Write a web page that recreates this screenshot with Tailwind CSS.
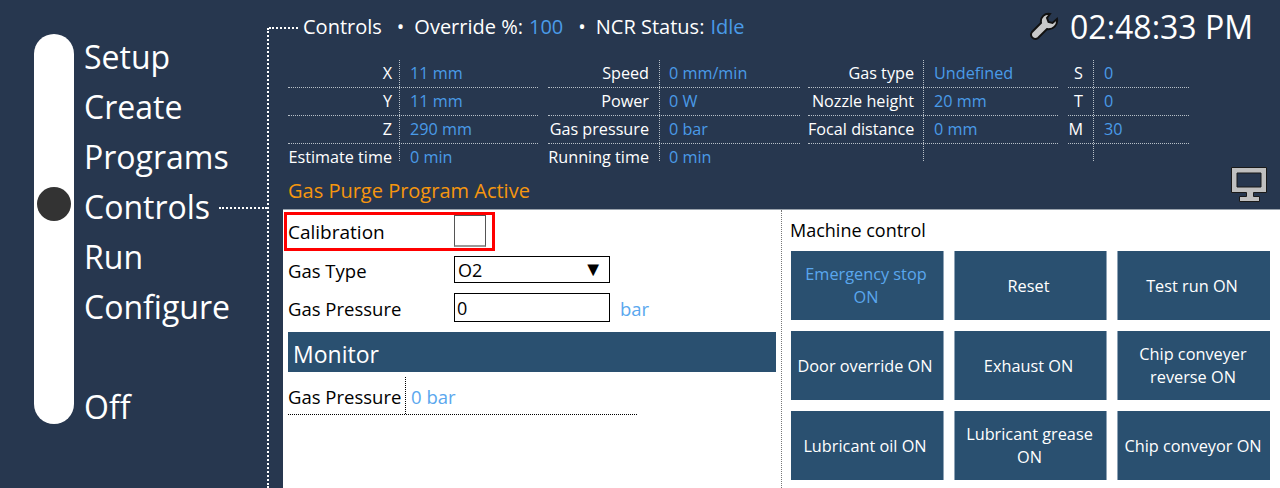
<!DOCTYPE html>
<html lang="en">
<head>
  <meta charset="UTF-8">
  <title>Controls</title>
  <script src="https://cdn.jsdelivr.net/npm/@tailwindcss/browser@4"></script>
</head>
<body class="bg-[#27374f] h-[488px] w-[1280px] overflow-hidden flex text-white font-['Open_Sans',sans-serif]">
  <!-- sidebar -->
  <nav class="w-[267px] shrink-0 flex pl-[34px] pt-[34px]">
    <div class="relative w-10 h-[390px] bg-white rounded-full shrink-0">
      <div class="absolute left-[3px] top-[153px] w-[34px] h-[34px] rounded-full bg-[#333333]"></div>
    </div>
    <ul class="ml-[10px] mt-[-2px] text-[32px] leading-[50px] flex-1">
      <li>Setup</li>
      <li>Create</li>
      <li>Programs</li>
      <li class="flex items-center">Controls<span class="flex-1 ml-[9px] mt-[1px] border-t-2 border-dotted border-white"></span></li>
      <li>Run</li>
      <li>Configure</li>
      <li class="mt-[50px]">Off</li>
    </ul>
  </nav>

  <main class="flex-1 flex flex-col mt-[28px] border-l-2 border-dotted border-white min-w-0 relative">
    <!-- header -->
    <header class="flex items-center h-[0px] -mt-[1px] pl-[34px] text-[20px] relative">
      <span class="absolute left-0 top-0 w-[29px] border-t-2 border-dotted border-white"></span>
      <span>Controls</span>
      <span class="ml-[15px]">•</span>
      <span class="ml-[10px]">Override %:</span>
      <span class="ml-[6px] text-[#4a9be8]">100</span>
      <span class="ml-[15px]">•</span>
      <span class="ml-[10px]">NCR Status:</span>
      <span class="ml-[6px] text-[#4a9be8]">Idle</span>
      <div class="ml-auto flex items-center pr-[27px]">
        <svg class="w-[30px] h-[30px]" viewBox="0 0 30 30"><path d="M21 2 C16 1 11 5 12 11 L3 20 C0 24 5 29 9 26 L18 17 C24 18 29 13 28 7 L23.5 11 L19.5 10 L18 6 Z" fill="#c8c8c8" stroke="#111" stroke-width="2"/></svg>
        <span class="ml-[11px] text-[32px]">02:48:33 PM</span>
      </div>
    </header>

    <!-- status table -->
    <section class="flex mt-[33px] ml-[19px] text-[16.2px] leading-[27px]">
      <div class="w-[250px]">
        <div class="flex h-[28px] border-b border-dotted border-[#b8c0c8]"><span class="w-[104px] text-right">X</span><span class="ml-[7px] pl-[10px] border-l border-dotted border-[#b8c0c8] text-[#4a9be8]">11 mm</span></div>
        <div class="flex h-[28px] border-b border-dotted border-[#b8c0c8]"><span class="w-[104px] text-right">Y</span><span class="ml-[7px] pl-[10px] border-l border-dotted border-[#b8c0c8] text-[#4a9be8]">11 mm</span></div>
        <div class="flex h-[28px] border-b border-dotted border-[#b8c0c8]"><span class="w-[104px] text-right">Z</span><span class="ml-[7px] pl-[10px] border-l border-dotted border-[#b8c0c8] text-[#4a9be8]">290 mm</span></div>
        <div class="flex h-[17px]"><span class="w-[104px] text-right whitespace-nowrap">Estimate time</span><span class="ml-[7px] pl-[10px] border-l border-dotted border-[#b8c0c8] text-[#4a9be8]">0 min</span></div>
      </div>
      <div class="w-[252px] ml-[10px]">
        <div class="flex h-[28px] border-b border-dotted border-[#b8c0c8]"><span class="w-[101px] text-right">Speed</span><span class="ml-[10px] pl-[9px] border-l border-dotted border-[#b8c0c8] text-[#4a9be8]">0 mm/min</span></div>
        <div class="flex h-[28px] border-b border-dotted border-[#b8c0c8]"><span class="w-[101px] text-right">Power</span><span class="ml-[10px] pl-[9px] border-l border-dotted border-[#b8c0c8] text-[#4a9be8]">0 W</span></div>
        <div class="flex h-[28px] border-b border-dotted border-[#b8c0c8]"><span class="w-[101px] text-right">Gas pressure</span><span class="ml-[10px] pl-[9px] border-l border-dotted border-[#b8c0c8] text-[#4a9be8]">0 bar</span></div>
        <div class="flex h-[17px]"><span class="w-[101px] text-right whitespace-nowrap">Running time</span><span class="ml-[10px] pl-[9px] border-l border-dotted border-[#b8c0c8] text-[#4a9be8]">0 min</span></div>
      </div>
      <div class="w-[250px] ml-[8px]">
        <div class="flex h-[28px] border-b border-dotted border-[#b8c0c8]"><span class="w-[106px] text-right">Gas type</span><span class="ml-[9px] pl-[10px] border-l border-dotted border-[#b8c0c8] text-[#4a9be8]">Undefined</span></div>
        <div class="flex h-[28px] border-b border-dotted border-[#b8c0c8]"><span class="w-[106px] text-right">Nozzle height</span><span class="ml-[9px] pl-[10px] border-l border-dotted border-[#b8c0c8] text-[#4a9be8]">20 mm</span></div>
        <div class="flex h-[28px] border-b border-dotted border-[#b8c0c8]"><span class="w-[106px] text-right whitespace-nowrap">Focal distance</span><span class="ml-[9px] pl-[10px] border-l border-dotted border-[#b8c0c8] text-[#4a9be8]">0 mm</span></div>
        <div class="flex h-[17px]"><span class="w-[106px]"></span><span class="ml-[9px] border-l border-dotted border-[#b8c0c8]"></span></div>
      </div>
      <div class="w-[121px] ml-[10px]">
        <div class="flex h-[28px] border-b border-dotted border-[#b8c0c8]"><span class="w-[15px] text-right">S</span><span class="ml-[10px] pl-[10px] border-l border-dotted border-[#b8c0c8] text-[#4a9be8]">0</span></div>
        <div class="flex h-[28px] border-b border-dotted border-[#b8c0c8]"><span class="w-[15px] text-right">T</span><span class="ml-[10px] pl-[10px] border-l border-dotted border-[#b8c0c8] text-[#4a9be8]">0</span></div>
        <div class="flex h-[28px] border-b border-dotted border-[#b8c0c8]"><span class="w-[15px] text-right">M</span><span class="ml-[10px] pl-[10px] border-l border-dotted border-[#b8c0c8] text-[#4a9be8]">30</span></div>
        <div class="flex h-[17px]"><span class="w-[15px]"></span><span class="ml-[10px] border-l border-dotted border-[#b8c0c8]"></span></div>
      </div>
    </section>

    <!-- banner -->
    <div class="flex items-start justify-between h-[48px] ml-[19px] pr-[12px]">
      <span class="mt-[18px] text-[20px] leading-[24px] text-[#f6960e]">Gas Purge Program Active</span>
      <svg class="w-[37px] h-[35px] mt-[6px]" viewBox="0 0 37 35"><path d="M0.5 0.5 H35.5 V25.5 H22.5 V29.5 H28.5 V34.5 H8.5 V29.5 H15.5 V25.5 H0.5 Z M6 6 V20 H30 V6 Z" fill="#c0c0c0" fill-rule="evenodd" stroke="#1a1a1a" stroke-width="1"/></svg>
    </div>

    <!-- white panel -->
    <div class="ml-[14px] flex-1 bg-white border-t border-[#9aa3ad] text-black flex min-h-0">
      <div class="w-[498px] shrink-0 pl-[5px] text-[18.5px]">
        <div class="-ml-[4px] mt-[2px] w-[211px] h-[39px] border-[3px] border-[#ff0000] flex items-center pl-[1px]">
          <span class="w-[166px] text-[19px] mt-[2px]">Calibration</span>
          <span class="w-[32px] h-[32px] border border-[#555555] border-b-2 border-b-[#999999] -mt-[1px]"></span>
        </div>
        <div class="flex items-center mt-[5px] h-[27px]">
          <span class="w-[166px] mt-[2px]">Gas Type</span>
          <div class="w-[156px] h-[27px] border border-black flex items-center justify-between pl-[3px] pr-[6px] pt-[2px] text-[18px]">O2<span class="text-[20px] leading-[20px] -mt-[4px]">▼</span></div>
        </div>
        <div class="flex items-center mt-[10px] h-[29px]">
          <span class="w-[166px] mt-[2px]">Gas Pressure</span>
          <div class="w-[156px] h-[29px] border border-black flex items-center pl-[2px] pt-[2px] text-[18px]">0</div>
          <span class="ml-[10px] mt-[2px] text-[#5aa7ee]">bar</span>
        </div>
        <div class="mt-[10px] w-[488px] h-[40px] bg-[#2a5070] text-white text-[23px] leading-[44px] pl-[5px]">Monitor</div>
        <div class="mt-[5px] w-[349px] h-[38px] flex border-b border-dotted border-black">
          <span class="w-[117px] pt-[6px] whitespace-nowrap">Gas Pressure</span>
          <span class="pl-[5px] pt-[6px] border-l border-dotted border-black text-[#5aa7ee]">0 bar</span>
        </div>
      </div>
      <div class="flex-1 border-l border-dotted border-[#777777] pl-[9px] pt-[8px]">
        <div class="text-[18px] leading-[25px] -ml-[1px]">Machine control</div>
        <div class="mt-[8px] grid grid-cols-[153px_153px_153px] auto-rows-[69px] gap-x-[10px] gap-y-[11px] text-[16.3px] leading-[23px] text-white text-center">
          <div class="bg-[#2a5070] border-r border-[#8ea3b6] flex items-center justify-center pl-[4px] pr-[6px] pt-[1px] text-[#5aa7ee]">Emergency stop ON</div>
          <div class="bg-[#2a5070] border-x border-[#8ea3b6] flex items-center justify-center pl-[3px] pr-[7px] pt-[1px]">Reset</div>
          <div class="bg-[#2a5070] border-l border-[#8ea3b6] flex items-center justify-center pl-[3px] pr-[7px] pt-[1px]">Test run ON</div>
          <div class="bg-[#2a5070] border-r border-[#8ea3b6] flex items-center justify-center pl-[3px] pr-[7px] pt-[1px]">Door override ON</div>
          <div class="bg-[#2a5070] border-x border-[#8ea3b6] flex items-center justify-center pl-[3px] pr-[7px] pt-[1px]">Exhaust ON</div>
          <div class="bg-[#2a5070] border-l border-[#8ea3b6] flex items-center justify-center pl-[4px] pr-[6px] pt-[1px]">Chip conveyer reverse ON</div>
          <div class="bg-[#2a5070] border-r border-[#8ea3b6] flex items-center justify-center pl-[3px] pr-[7px] pt-[1px]">Lubricant oil ON</div>
          <div class="bg-[#2a5070] border-x border-[#8ea3b6] flex items-center justify-center pl-[4px] pr-[6px] pt-[1px]">Lubricant grease ON</div>
          <div class="bg-[#2a5070] border-l border-[#8ea3b6] flex items-center justify-center pl-[2px] pr-[4px] pt-[1px]">Chip conveyor ON</div>
        </div>
      </div>
    </div>
  </main>
</body>
</html>
